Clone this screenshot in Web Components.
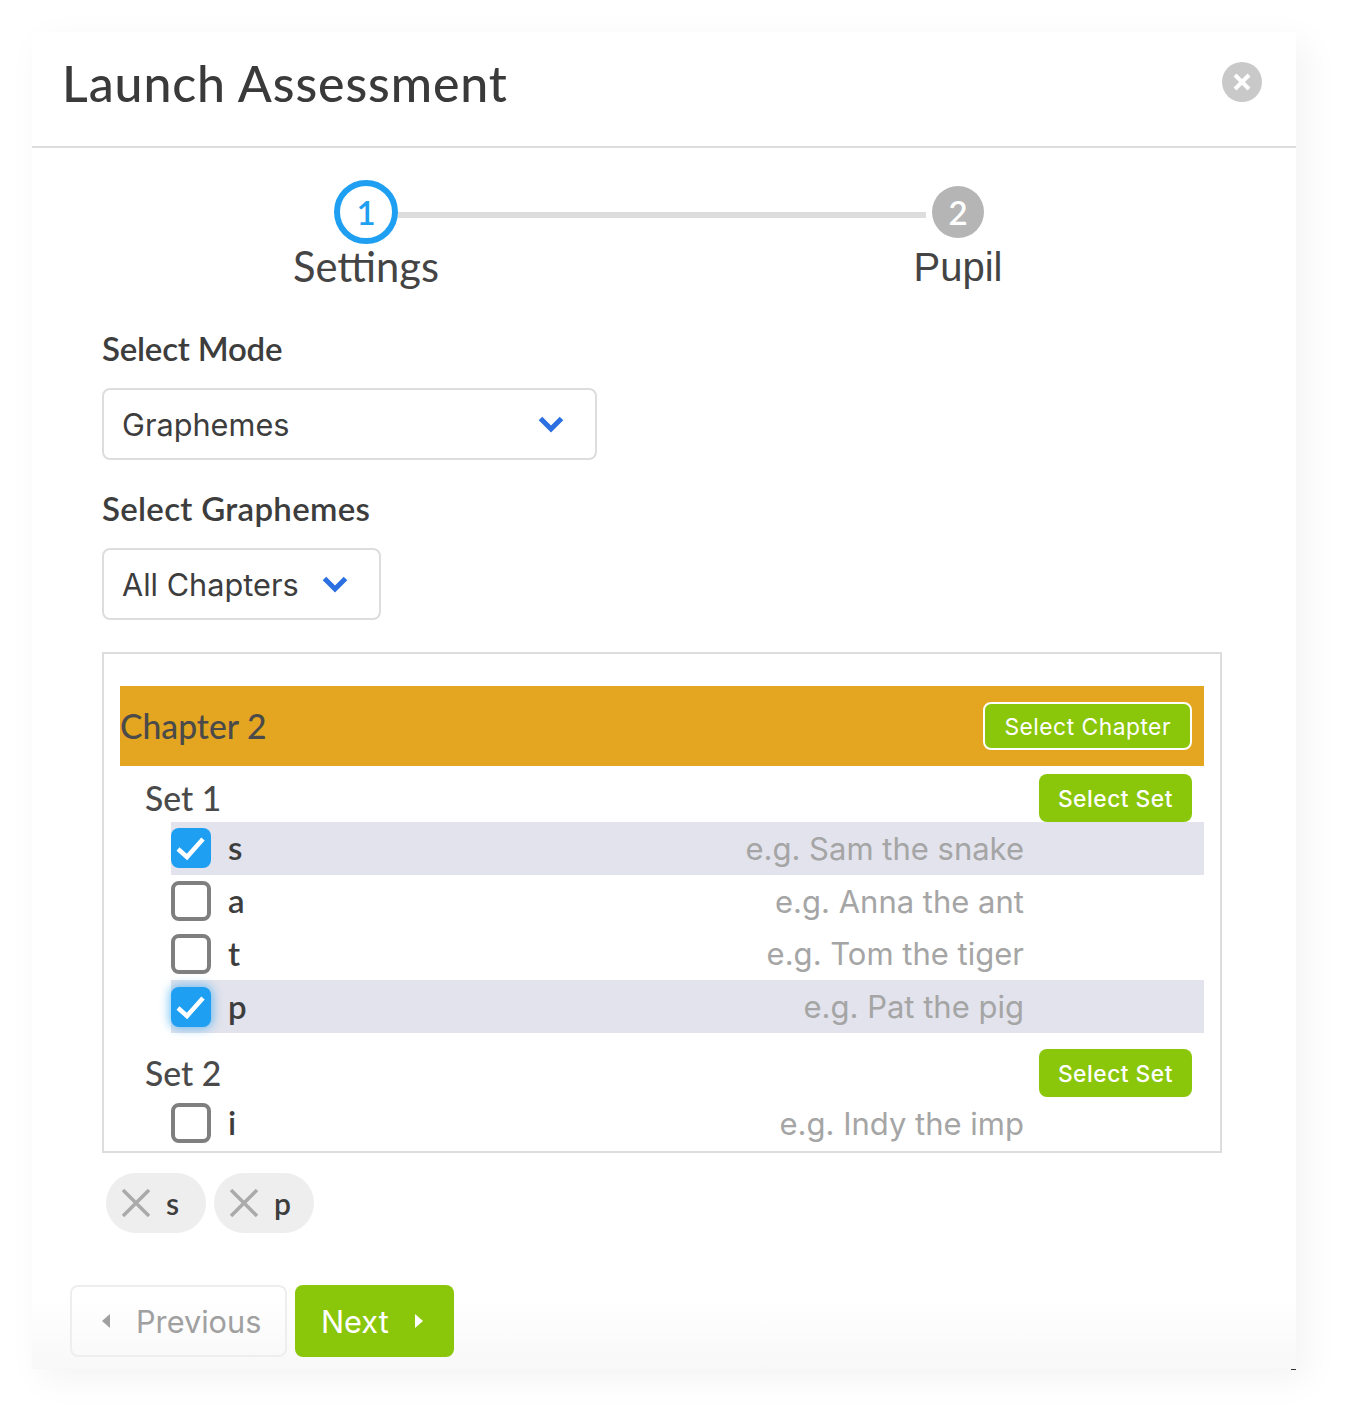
<!DOCTYPE html>
<html>
<head>
<meta charset="utf-8">
<style>
  html, body { margin: 0; background: #fff; }
  body { padding: 32px 52px 53px 32px; font-family: "Lato", "Noto Sans", sans-serif; color: #444; }
</style>
</head>
<body>
<launch-dialog>
  <wizard-steps></wizard-steps>
  <field-select label="Select Mode" value="Graphemes" width="495" spacing="-.2"></field-select>
  <field-select label="Select Graphemes" value="All Chapters" width="279" spacing=".3"></field-select>
  <chapter-panel title="Chapter 2">
    <grapheme-set name="Set 1">
      <grapheme-row letter="s" hint="e.g. Sam the snake" checked></grapheme-row>
      <grapheme-row letter="a" hint="e.g. Anna the ant"></grapheme-row>
      <grapheme-row letter="t" hint="e.g. Tom the tiger"></grapheme-row>
      <grapheme-row letter="p" hint="e.g. Pat the pig" checked focused></grapheme-row>
    </grapheme-set>
    <grapheme-set name="Set 2" spaced>
      <grapheme-row letter="i" hint="e.g. Indy the imp"></grapheme-row>
    </grapheme-set>
  </chapter-panel>
  <div style="display:flex;gap:8px;margin:20px 0 0 74px">
    <grapheme-chip letter="s"></grapheme-chip>
    <grapheme-chip letter="p"></grapheme-chip>
  </div>
  <wizard-nav></wizard-nav>
</launch-dialog>

<script>
'use strict';

const UI_FONT = '"Inter", "Noto Sans", sans-serif';
const HEAD_FONT = '"Lato", "Noto Sans", sans-serif';
const CHEVRON = '<svg width="28" height="20" viewBox="0 0 28 20"><path d="M3.5 4.5 L14 15 L24.5 4.5" fill="none" stroke="#2b6fe0" stroke-width="5"/></svg>';

class LaunchDialog extends HTMLElement {
    constructor() {
        super();
        this.attachShadow({mode: 'open'}).innerHTML = `
            <style>
                :host{ display:block; position:relative; width:1264px; height:1337px; box-shadow:10px 10px 34px rgba(0,0,0,.05); background:linear-gradient(#fff calc(100% - 70px), #f8f8f8); font-family:${HEAD_FONT}; }
                header{ height:114px; border-bottom:2px solid #ddd; display:flex; align-items:center; justify-content:space-between; padding:0 34px 0 30px; }
                h1{ margin:0; font-size:50px; font-weight:500; letter-spacing:.9px; color:#3a3a3a; line-height:1; position:relative; top:-6px; }
                .close{ width:40px; height:40px; border-radius:50%; background:#c9c9c9; display:flex; align-items:center; justify-content:center; position:relative; top:-7px; }
                .tick{ position:absolute; right:0; bottom:-1px; width:5px; height:1px; background:#333; }
            </style>
            <header>
                <h1>Launch Assessment</h1>
                <div class="close"><svg width="18" height="18" viewBox="0 0 18 18"><path d="M2 2 L16 16 M16 2 L2 16" stroke="#fff" stroke-width="4"/></svg></div>
            </header>
            <slot></slot>
            <div class="tick"></div>
        `;
    }
}

class WizardSteps extends HTMLElement {
    constructor() {
        super();
        this.attachShadow({mode: 'open'}).innerHTML = `
            <style>
                :host{ display:flex; padding:32px 0 0 302px; height:120px; align-items:flex-start; }
                .step{ display:flex; flex-direction:column; align-items:center; }
                .dot{ box-sizing:border-box; height:64px; display:flex; align-items:center; justify-content:center; border-radius:50%; font-family:${HEAD_FONT}; font-weight:600; font-size:33px; }
                .one{ width:64px; border:6px solid #1e9ff2; color:#1e9ff2; background:#fff; }
                .two{ width:52px; height:52px; margin:6px 0; background:#b5b5b5; color:#fff; }
                .name{ white-space:nowrap; font-size:41.7px; line-height:44px; color:#444; }
                .pupil{ font-family:"Liberation Sans", sans-serif; font-size:40px; line-height:46px; }
                .line{ width:528px; height:6px; background:#ddd; margin:32px 6px 0 0; }
            </style>
            <div class="step" style="width:64px"><div class="dot one">1</div><div class="name">Settings</div></div>
            <div class="line"></div>
            <div class="step" style="width:52px"><div class="dot two">2</div><div class="name pupil">Pupil</div></div>
        `;
    }
}

class FieldSelect extends HTMLElement {
    constructor() {
        super();
        this.attachShadow({mode: 'open'});
    }
    connectedCallback() {
        this.shadowRoot.innerHTML = `
            <style>
                :host{ display:block; margin:0 0 0 70px; padding-top:26px; }
                label{ display:block; font-size:33px; font-weight:600; letter-spacing:${this.getAttribute('spacing')}px; line-height:44px; color:#3d3d3d; margin-bottom:18px; }
                .box{ box-sizing:border-box; width:${this.getAttribute('width')}px; height:72px; border:2px solid #ddd; border-radius:8px; display:flex; align-items:center; justify-content:space-between; padding:0 30px 0 18px; font-family:${UI_FONT}; font-size:30.7px; color:#3d3d3d; }
            </style>
            <label>${this.getAttribute('label')}</label>
            <div class="box"><span>${this.getAttribute('value')}</span>${CHEVRON}</div>
        `;
    }
}

class ChapterPanel extends HTMLElement {
    constructor() {
        super();
        this.attachShadow({mode: 'open'});
    }
    connectedCallback() {
        this.shadowRoot.innerHTML = `
            <style>
                :host{ display:block; box-sizing:border-box; width:1120px; height:501px; margin:32px 0 0 70px; border:2px solid #ddd; padding:32px 16px 0; overflow:hidden; background:#fff; }
                .band{ height:80px; background:#e4a521; display:flex; align-items:center; justify-content:space-between; padding-right:12px; font-size:33.7px; color:#4a4a4a; }
                .band span{ font-weight:500; }
            </style>
            <div class="band"><span>${this.getAttribute('title')}</span><pick-button outlined>Select Chapter</pick-button></div>
            <slot></slot>
        `;
    }
}

class PickButton extends HTMLElement {
    constructor() {
        super();
        this.attachShadow({mode: 'open'}).innerHTML = `
            <style>
                :host{ display:inline-flex; box-sizing:border-box; height:48px; align-items:center; padding:0 19px 0; background:#8ac70b; color:#fff; border-radius:8px; font-family:${UI_FONT}; font-size:22.8px; letter-spacing:.5px; white-space:nowrap; }
                :host([outlined]){ border:2px solid #fff; }
                span{ position:relative; top:.5px; }
            </style>
            <span><slot></slot></span>
        `;
    }
}

class GraphemeSet extends HTMLElement {
    constructor() {
        super();
        this.attachShadow({mode: 'open'});
    }
    connectedCallback() {
        this.shadowRoot.innerHTML = `
            <style>
                :host{ display:block; padding-left:25px; margin-top:${this.hasAttribute('spaced') ? 16 : 8}px; }
                .head{ display:flex; align-items:center; justify-content:space-between; height:48px; padding-right:12px; font-size:33.7px; font-weight:500; color:#4a4a4a; }
                .rows{ margin-left:26px; }
            </style>
            <div class="head"><span>${this.getAttribute('name')}</span><pick-button>Select Set</pick-button></div>
            <div class="rows"><slot></slot></div>
        `;
    }
}

class GraphemeRow extends HTMLElement {
    constructor() {
        super();
        this.attachShadow({mode: 'open'});
    }
    connectedCallback() {
        const on = this.hasAttribute('checked');
        const glow = this.hasAttribute('focused') ? 'box-shadow:0 0 10px 2px rgba(30,159,242,.55);' : '';
        const mark = on ? '<svg width="32" height="26" viewBox="0 0 32 26"><path d="M3 14 L12 22 L28 4" fill="none" stroke="#fff" stroke-width="4.5"/></svg>' : '';
        this.shadowRoot.innerHTML = `
            <style>
                :host{ display:flex; height:52.75px; align-items:center; background:${on ? '#e2e3ec' : 'transparent'}; }
                .box{ box-sizing:border-box; width:40px; height:40px; border-radius:8px; flex:none; display:flex; align-items:center; justify-content:center; ${on ? 'background:#1e9ff2;' + glow : 'border:4px solid #7f7f7f;background:#fff;'} }
                .letter{ margin-left:17px; font-size:33px; font-weight:600; color:#3d3d3d; position:relative; top:-1px; }
                .hint{ margin-left:auto; margin-right:180px; font-family:${UI_FONT}; font-size:31px; color:#a5a5a5; }
            </style>
            <div class="box">${mark}</div>
            <span class="letter">${this.getAttribute('letter')}</span>
            <span class="hint">${this.getAttribute('hint')}</span>
        `;
    }
}

class GraphemeChip extends HTMLElement {
    constructor() {
        super();
        this.attachShadow({mode: 'open'});
    }
    connectedCallback() {
        this.shadowRoot.innerHTML = `
            <style>
                :host{ display:flex; width:100px; height:60px; box-sizing:border-box; align-items:center; padding-left:16px; gap:16px; background:#eee; border-radius:30px; font-size:30px; color:#3d3d3d; font-family:${HEAD_FONT}; font-weight:600; }
            </style>
            <svg width="28" height="28" viewBox="0 0 28 28"><path d="M1 1 L27 27 M27 1 L1 27" stroke="#aaa" stroke-width="3.5"/></svg>
            <span>${this.getAttribute('letter')}</span>
        `;
    }
}

class WizardNav extends HTMLElement {
    constructor() {
        super();
        this.attachShadow({mode: 'open'}).innerHTML = `
            <style>
                :host{ display:flex; gap:8px; margin:52px 0 0 38px; font-family:${UI_FONT}; font-size:30.7px; }
                .btn{ box-sizing:border-box; height:72px; border-radius:8px; display:flex; align-items:center; }
                .prev{ width:217px; border:2px solid #eee; color:#a0a0a0; padding-left:30px; gap:26px; }
                .next{ width:159px; background:#8ac70b; color:#fff; padding-left:26px; gap:26px; }
            </style>
            <div class="btn prev"><svg width="8" height="14" viewBox="0 0 8 14"><path d="M8 0 V14 L0 7 Z" fill="#a0a0a0"/></svg><span>Previous</span></div>
            <div class="btn next"><span>Next</span><svg width="8" height="14" viewBox="0 0 8 14"><path d="M0 0 V14 L8 7 Z" fill="#fff"/></svg></div>
        `;
    }
}

customElements.define('launch-dialog', LaunchDialog);
customElements.define('wizard-steps', WizardSteps);
customElements.define('field-select', FieldSelect);
customElements.define('chapter-panel', ChapterPanel);
customElements.define('pick-button', PickButton);
customElements.define('grapheme-set', GraphemeSet);
customElements.define('grapheme-row', GraphemeRow);
customElements.define('grapheme-chip', GraphemeChip);
customElements.define('wizard-nav', WizardNav);
</script>
</body>
</html>
